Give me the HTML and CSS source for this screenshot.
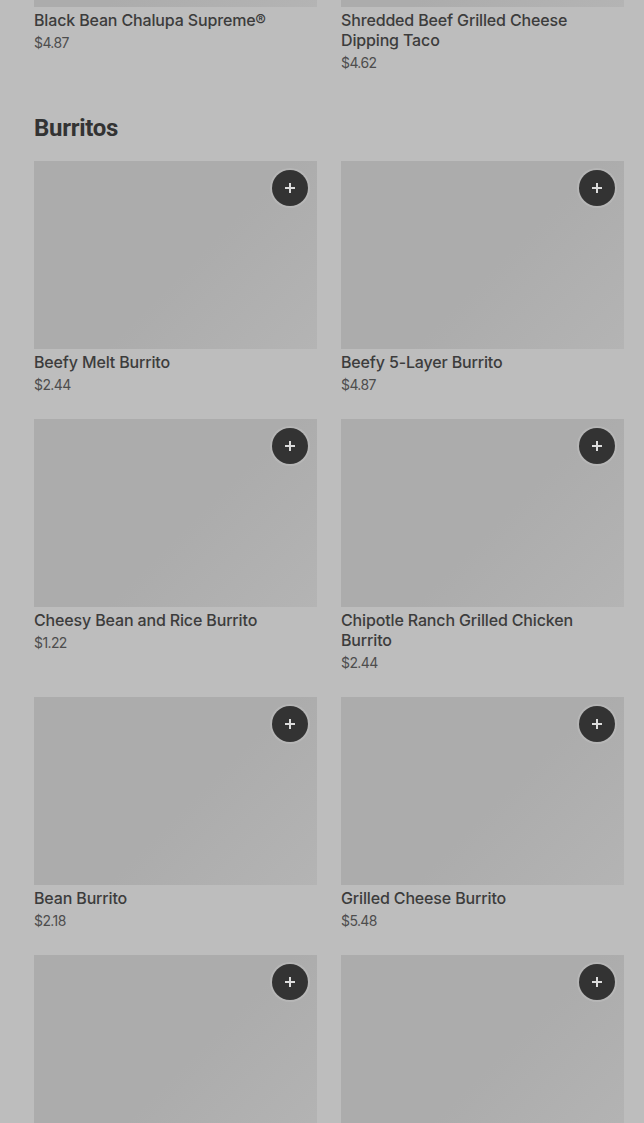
FILE: index.html
```html
<!DOCTYPE html>
<html lang="en">
<head>
    <meta charset="UTF-8">
    <meta name="viewport" content="width=device-width, initial-scale=1.0">
    <title>Menu</title>
    <link rel="stylesheet" href="styles.css">
</head>
<body>
    <main class="menu">
        <!-- tail of the previous section, scrolled up -->
        <section class="section section-scrolled">
            <div class="grid">
                <div class="item">
                    <div class="thumb"></div>
                    <div class="name">Black Bean Chalupa Supreme®</div>
                    <div class="price">$4.87</div>
                </div>
                <div class="item">
                    <div class="thumb"></div>
                    <div class="name">Shredded Beef Grilled Cheese Dipping Taco</div>
                    <div class="price">$4.62</div>
                </div>
            </div>
        </section>

        <section class="section">
            <h2 class="section-title">Burritos</h2>
            <div class="grid">
                <div class="item">
                    <div class="thumb"><button class="add" aria-label="Add"><svg viewBox="0 0 12 12"><path d="M6 1v10M1 6h10"/></svg></button></div>
                    <div class="name">Beefy Melt Burrito</div>
                    <div class="price">$2.44</div>
                </div>
                <div class="item">
                    <div class="thumb"><button class="add" aria-label="Add"><svg viewBox="0 0 12 12"><path d="M6 1v10M1 6h10"/></svg></button></div>
                    <div class="name">Beefy 5-Layer Burrito</div>
                    <div class="price">$4.87</div>
                </div>
                <div class="item">
                    <div class="thumb"><button class="add" aria-label="Add"><svg viewBox="0 0 12 12"><path d="M6 1v10M1 6h10"/></svg></button></div>
                    <div class="name">Cheesy Bean and Rice Burrito</div>
                    <div class="price">$1.22</div>
                </div>
                <div class="item">
                    <div class="thumb"><button class="add" aria-label="Add"><svg viewBox="0 0 12 12"><path d="M6 1v10M1 6h10"/></svg></button></div>
                    <div class="name">Chipotle Ranch Grilled Chicken Burrito</div>
                    <div class="price">$2.44</div>
                </div>
                <div class="item">
                    <div class="thumb"><button class="add" aria-label="Add"><svg viewBox="0 0 12 12"><path d="M6 1v10M1 6h10"/></svg></button></div>
                    <div class="name">Bean Burrito</div>
                    <div class="price">$2.18</div>
                </div>
                <div class="item">
                    <div class="thumb"><button class="add" aria-label="Add"><svg viewBox="0 0 12 12"><path d="M6 1v10M1 6h10"/></svg></button></div>
                    <div class="name">Grilled Cheese Burrito</div>
                    <div class="price">$5.48</div>
                </div>
                <div class="item">
                    <div class="thumb"><button class="add" aria-label="Add"><svg viewBox="0 0 12 12"><path d="M6 1v10M1 6h10"/></svg></button></div>
                </div>
                <div class="item">
                    <div class="thumb"><button class="add" aria-label="Add"><svg viewBox="0 0 12 12"><path d="M6 1v10M1 6h10"/></svg></button></div>
                </div>
            </div>
        </section>
    </main>
</body>
</html>
```

FILE: styles.css
```css
/* Page */
body {
    margin: 0;
    background: #bdbdbd;
    font-family: Inter, "Liberation Sans", sans-serif;
    color: #3a3a3a;
    overflow: hidden;
}

.menu {
    padding: 0 20px 0 34px;
}

/* Sections */
.section-scrolled {
    margin-top: -181px;
}

.section-title {
    margin: 39px 0 17px;
    font-family: Roboto, "Liberation Sans", sans-serif;
    font-size: 24px;
    line-height: 32px;
    font-weight: 700;
    color: #333333;
    letter-spacing: -0.3px;
}

.grid {
    display: grid;
    grid-template-columns: 283px 283px;
    column-gap: 24px;
    row-gap: 24px;
}

/* Menu item card */
.item {
    display: flex;
    flex-direction: column;
}

.thumb {
    position: relative;
    height: 188px;
    background: linear-gradient(135deg, #acacac 55%, #b4b4b4 100%);
}

.add {
    position: absolute;
    top: 9px;
    right: 9px;
    width: 36px;
    height: 36px;
    padding: 0;
    border: none;
    border-radius: 50%;
    background: #333333;
    box-shadow: 0 0 0 2px rgba(200, 200, 200, 0.35);
    display: flex;
    align-items: center;
    justify-content: center;
}

.add svg {
    width: 12px;
    height: 12px;
    stroke: #dcdcdc;
    stroke-width: 2;
    fill: none;
}

.name {
    margin-top: 3px;
    font-size: 16px;
    line-height: 20px;
    font-weight: 500;
    letter-spacing: -0.15px;
    color: #3c3c3c;
}

.price {
    margin-top: 3px;
    font-size: 14px;
    line-height: 20px;
    letter-spacing: -0.6px;
    color: #4d4d4d;
}
```
